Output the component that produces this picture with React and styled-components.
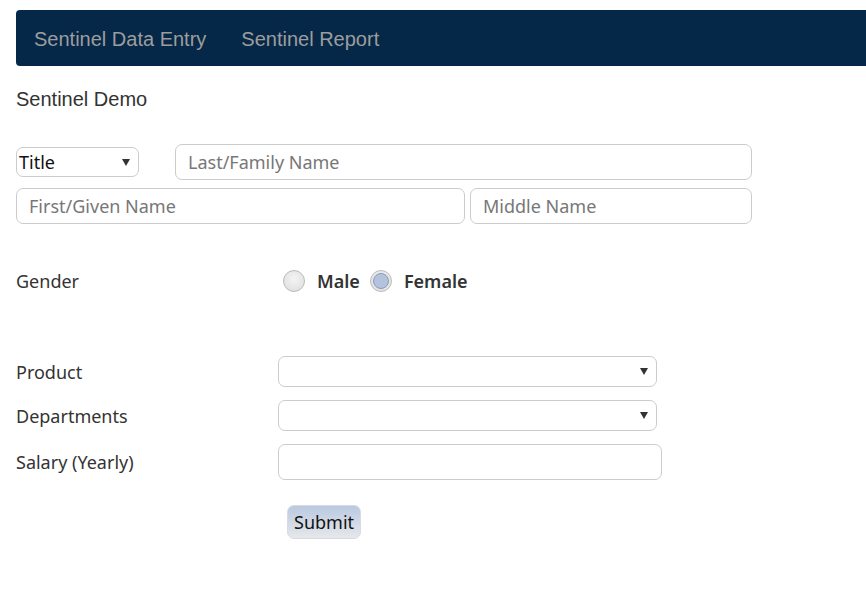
import React from "react";
import styled, { createGlobalStyle } from "styled-components";

const Global = createGlobalStyle`
  html, body { margin: 0; padding: 0; background: #fff; overflow: hidden; }
  body { font-family: "Noto Sans", "Open Sans", sans-serif; color: #333; }
  * { box-sizing: border-box; }
`;

const Page = styled.div`
  padding: 10px 0 0 16px;
`;

const NavBar = styled.nav`
  display: flex;
  align-items: center;
  height: 56px;
  background: #062848;
  border-radius: 4px 0 0 4px;
  padding: 2px 0 0 18px;
  gap: 35px;
`;

const NavLink = styled.a`
  font-family: "Liberation Sans", Arial, sans-serif;
  font-size: 20px;
  color: #9d9d9d;
  text-decoration: none;
`;

const Heading = styled.div`
  font-family: "Liberation Sans", Arial, sans-serif;
  font-size: 20px;
  color: #333;
  margin-top: 22px;
  line-height: 22px;
`;

const NameBlock = styled.div`
  margin-top: 34px;
  width: 736px;
  display: flex;
  flex-direction: column;
  gap: 8px;
`;

const NameRow = styled.div`
  display: flex;
  align-items: center;
  gap: ${(p) => p.$gap}px;
`;

const TextBox = styled.input`
  width: ${(p) => p.$w}px;
  height: 36px;
  border: 1px solid #ccc;
  border-radius: 7px;
  padding: 0 12px;
  font-family: "Noto Sans", sans-serif;
  font-size: 18px;
  color: #333;
  background: #fff;
  &::placeholder { color: #777; }
`;

const SelectBox = styled.div`
  width: ${(p) => p.$w}px;
  height: ${(p) => p.$h}px;
  border: 1px solid #ccc;
  border-radius: 7px;
  display: flex;
  align-items: center;
  justify-content: space-between;
  padding: 0 8px 0 2px;
  font-family: "Noto Sans", sans-serif;
  font-size: 18px;
  color: #111;
  background: #fff;
`;

const Caret = styled.span`
  width: 0;
  height: 0;
  border-left: 4px solid transparent;
  border-right: 4px solid transparent;
  border-top: 7px solid #333;
`;

const FieldRow = styled.div`
  display: grid;
  grid-template-columns: 262px auto;
  align-items: center;
  margin-top: ${(p) => p.$mt || 0}px;
`;

const Label = styled.label`
  font-family: "Noto Sans", sans-serif;
  font-size: 18px;
  color: #333;
`;

const RadioGroup = styled.div`
  display: flex;
  align-items: center;
  padding-left: 5px;
`;

const RadioDot = styled.span`
  width: 22px;
  height: 22px;
  border-radius: 50%;
  border: 1px solid #bbb;
  background: radial-gradient(circle at 50% 40%, #f4f4f4, #dcdcdc);
  display: inline-flex;
  align-items: center;
  justify-content: center;
  margin-right: 12px;
  &::after {
    content: "";
    display: ${(p) => (p.$checked ? "block" : "none")};
    width: 14px;
    height: 14px;
    border-radius: 50%;
    background: #b3c3de;
    border: 1px solid #8a9ab8;
  }
`;

const RadioText = styled.span`
  font-family: "Noto Sans", sans-serif;
  font-size: 18px;
  font-weight: 600;
  color: #333;
  margin-right: 10px;
`;

const SubmitButton = styled.button`
  margin: 25px 0 0 271px;
  height: 34px;
  padding: 0 6px;
  border: 1px solid #d6dbe4;
  border-radius: 7px;
  background: linear-gradient(#bac9e0, #e6e8eb);
  font-family: "Noto Sans", sans-serif;
  font-size: 18px;
  color: #111;
`;

export default function App() {
  return (
    <Page>
      <Global />
      <NavBar>
        <NavLink>Sentinel Data Entry</NavLink>
        <NavLink>Sentinel Report</NavLink>
      </NavBar>
      <Heading>Sentinel Demo</Heading>
      <NameBlock>
        <NameRow $gap={36}>
          <SelectBox $w={123} $h={30}>
            Title <Caret />
          </SelectBox>
          <TextBox $w={577} placeholder="Last/Family Name" />
        </NameRow>
        <NameRow $gap={5}>
          <TextBox $w={449} placeholder="First/Given Name" />
          <TextBox $w={282} placeholder="Middle Name" />
        </NameRow>
      </NameBlock>
      <FieldRow $mt={45}>
        <Label>Gender</Label>
        <RadioGroup>
          <RadioDot />
          <RadioText>Male</RadioText>
          <RadioDot $checked />
          <RadioText>Female</RadioText>
        </RadioGroup>
      </FieldRow>
      <FieldRow $mt={63}>
        <Label>Product</Label>
        <SelectBox $w={379} $h={31}><span /><Caret /></SelectBox>
      </FieldRow>
      <FieldRow $mt={13}>
        <Label>Departments</Label>
        <SelectBox $w={379} $h={31}><span /><Caret /></SelectBox>
      </FieldRow>
      <FieldRow $mt={13}>
        <Label>Salary (Yearly)</Label>
        <TextBox $w={384} />
      </FieldRow>
      <SubmitButton>Submit</SubmitButton>
    </Page>
  );
}
